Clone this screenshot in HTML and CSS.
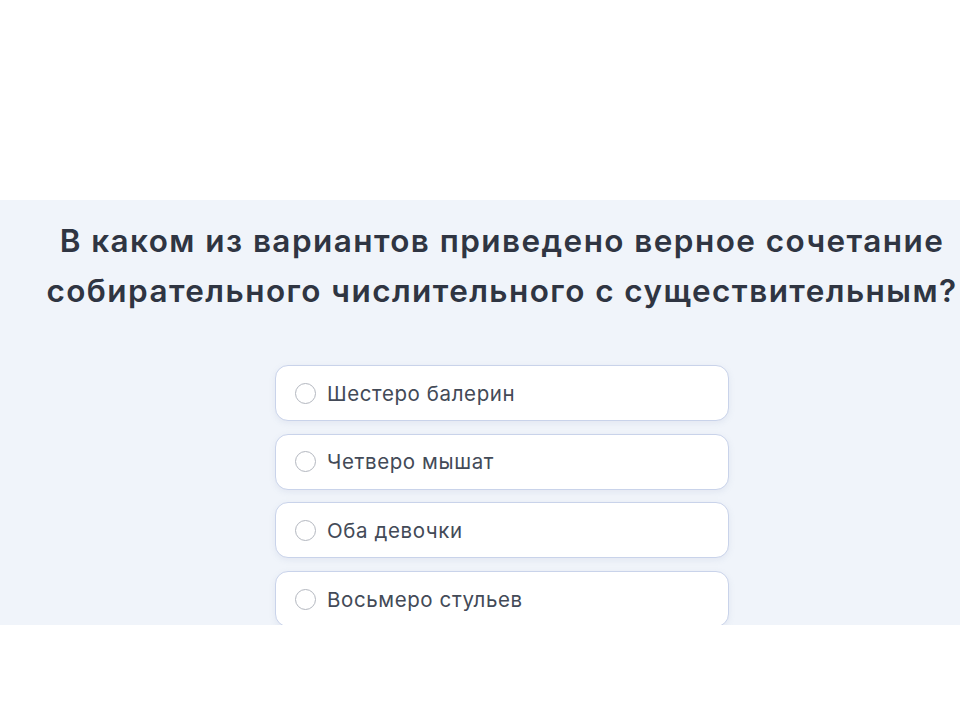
FILE: index.html
```html
<!DOCTYPE html>
<html lang="ru">
<head>
<meta charset="utf-8">
<link rel="stylesheet" href="styles.css">
</head>
<body>
<div class="top"></div>
<section class="band">
  <div class="inner">
    <h1 class="question">В каком из вариантов приведено верное сочетание<br>собирательного числительного с существительным?</h1>
    <div class="options">
      <label class="option"><span class="radio"></span><span class="label">Шестеро балерин</span></label>
      <label class="option"><span class="radio"></span><span class="label">Четверо мышат</span></label>
      <label class="option"><span class="radio"></span><span class="label">Оба девочки</span></label>
      <label class="option"><span class="radio"></span><span class="label">Восьмеро стульев</span></label>
    </div>
  </div>
</section>
</body>
</html>
```
FILE: styles.css
```css
html, body {
  margin: 0;
  padding: 0;
  background: #ffffff;
  overflow: hidden;
}
body {
  width: 960px;
  height: 720px;
  font-family: Inter, "Noto Sans", sans-serif;
}
.top {
  height: 200px;
}
.band {
  height: 425px;
  background: #f0f4fa;
  overflow: hidden;
}
.inner {
  width: 1004px;
  display: flex;
  flex-direction: column;
  align-items: center;
}
.question {
  margin: 0;
  padding-top: 16px;
  font-size: 31.5px;
  line-height: 50px;
  letter-spacing: 1.43px;
  font-weight: 600;
  color: #2f3542;
  text-align: center;
  white-space: nowrap;
}
.options {
  margin-top: 49px;
  display: flex;
  flex-direction: column;
  gap: 12.7px;
  width: 454px;
}
.option {
  box-sizing: border-box;
  height: 56px;
  display: flex;
  align-items: center;
  gap: 11px;
  padding-left: 19px;
  background: #ffffff;
  border: 1.5px solid #c9d3ea;
  border-radius: 13px;
  box-shadow: 0 2px 6px rgba(120, 140, 180, 0.12);
}
.radio {
  box-sizing: border-box;
  width: 21px;
  height: 21px;
  border: 1px solid #b3b7bf;
  border-radius: 50%;
  background: #fff;
  flex: none;
}
.label {
  font-size: 20.5px;
  letter-spacing: 0.6px;
  color: #434a57;
  font-weight: 400;
}
```
